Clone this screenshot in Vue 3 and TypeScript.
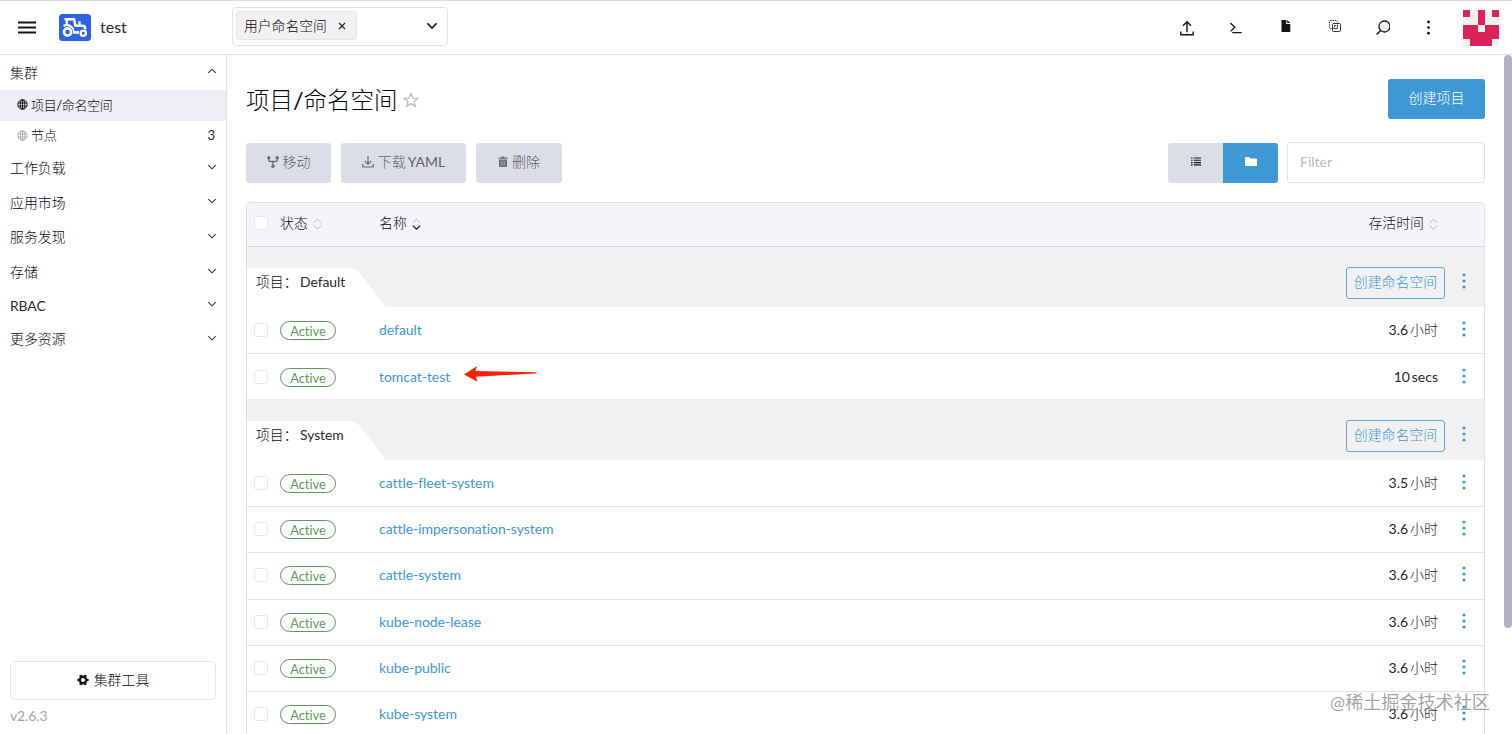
<script setup lang="ts">
interface Row { name: string; age: string; marked?: boolean }
interface Group { name: string; rows: Row[] }

const sections: string[] = ['工作负载', '应用市场', '服务发现', '存储', 'RBAC', '更多资源']

const groups: Group[] = [
  {
    name: 'Default',
    rows: [
      { name: 'default', age: '3.6 小时' },
      { name: 'tomcat-test', age: '10 secs', marked: true },
    ],
  },
  {
    name: 'System',
    rows: [
      { name: 'cattle-fleet-system', age: '3.5 小时' },
      { name: 'cattle-impersonation-system', age: '3.6 小时' },
      { name: 'cattle-system', age: '3.6 小时' },
      { name: 'kube-node-lease', age: '3.6 小时' },
      { name: 'kube-public', age: '3.6 小时' },
      { name: 'kube-system', age: '3.6 小时' },
    ],
  },
]
</script>

<template>
  <div class="page">
    <header class="top">
      <svg class="burger" width="18" height="14" viewBox="0 0 18 14"><path d="M0 1.500h18M0 6.500h18M0 11.500h18" stroke="#141419" stroke-width="1.800" /></svg>
      <div class="logo">
        <svg width="32" height="27" viewBox="0 0 32 27">
          <rect width="32" height="27" rx="3.500" fill="#2c63e5" />
          <path d="M5.500 5.200H15l1.500 6.500h7.300q2.200 0 2.200 2v3.500" fill="none" stroke="#fff" stroke-width="2.500" />
          <path d="M7.800 5v5.500L4.500 12M20.500 7.300v4M7.500 11.200q6 .3 7.200 6.500" fill="none" stroke="#fff" stroke-width="2.300" />
          <circle cx="8.600" cy="18" r="5.500" fill="#2c63e5" />
          <circle cx="8.600" cy="18" r="3.600" fill="none" stroke="#fff" stroke-width="2.600" />
          <path d="M14 17h6v2.800h-6z" fill="#fff" />
          <circle cx="24.300" cy="19.200" r="4.100" fill="#2c63e5" />
          <circle cx="24.300" cy="19.200" r="2.600" fill="none" stroke="#fff" stroke-width="2.300" />
        </svg>
      </div>
      <span class="cluster">test</span>
      <div class="select">
        <span class="tag">用户命名空间<svg width="8" height="8" viewBox="0 0 8 8"><path d="M1 1l6 6M7 1l-6 6" stroke="#222" stroke-width="1.100" /></svg></span>
        <svg width="12" height="8" viewBox="0 0 12 8"><path d="M1.300 1.300L6 6l4.700-4.700" fill="none" stroke="#141419" stroke-width="1.600" /></svg>
      </div>
      <div class="tools">
        <svg viewBox="0 0 20 20"><path d="M10 14.200V4M6 7.700l4-4 4 4M3.800 13.500v3.200h12.400v-3.200" fill="none" stroke="#141419" stroke-width="1.400" /></svg>
        <svg viewBox="0 0 20 20"><path d="M5.500 5l4.300 4.200-4.300 4.200M7.300 14.700h9.300" fill="none" stroke="#141419" stroke-width="1.300" /></svg>
        <svg viewBox="0 0 20 20"><path d="M8.500 2h4.800v4h4v8H8.500zM14.200 2l3.100 3.100h-3.100z" fill="#141419" /></svg>
        <svg viewBox="0 0 20 20" fill="none" stroke="#333" stroke-width="1"><rect x="8.500" y="2.500" width="8" height="8" rx="1" stroke-dasharray="1.400 .8" /><rect x="11.500" y="5.500" width="8" height="8" rx="1" /><rect x="13.500" y="7.500" width="3" height="3" stroke-dasharray="1.400 .7" /></svg>
        <svg viewBox="0 0 20 20"><circle cx="14.500" cy="8.500" r="5.500" fill="none" stroke="#141419" stroke-width="1.300" /><path d="M10.700 12.500l-4 4" stroke="#141419" stroke-width="1.600" /></svg>
        <svg viewBox="0 0 20 20" fill="#141419"><circle cx="10.500" cy="4" r="1.400" /><circle cx="10.500" cy="9.600" r="1.400" /><circle cx="10.500" cy="15.200" r="1.400" /></svg>
      </div>
      <svg class="avatar" width="36" height="36" viewBox="0 0 36 36" shape-rendering="crispEdges"><rect width="36" height="36" fill="#f0f0f0" /><path d="M0 0h7v7H0zM29 0h7v7h-7zM14.500 0h7v14.500h-7zM0 14.500h14.500v7h7v-7H36v14H0zM7 28h22v8H7z" fill="#da2459" /></svg>
    </header>

    <div class="body">
      <nav class="side">
        <div class="sec first"><span>集群</span><svg class="chev" viewBox="0 0 10 6"><path d="M1.300 4.800L5 1.200l3.700 3.600" /></svg></div>
        <div v-for="(item, i) in ['项目/命名空间', '节点']" :key="item" class="child" :class="{ active: i === 0 }">
          <svg width="11" height="11" viewBox="0 0 11 11" fill="none"><circle cx="5.500" cy="5.500" r="4.700" /><ellipse cx="5.500" cy="5.500" rx="2.200" ry="4.700" /><path d="M1 4h9M1 7h9M5.500 1v9" /></svg>
          <span>{{ item }}</span><b v-if="i === 1">3</b>
        </div>
        <div v-for="s in sections" :key="s" class="sec" :class="{ latin: s === 'RBAC' }"><span>{{ s }}</span><svg class="chev" viewBox="0 0 10 6"><path d="M1.300 1.200L5 4.800l3.700-3.600" /></svg></div>
        <div class="grow"></div>
        <button class="clustertools">
          <svg width="12" height="12" viewBox="0 0 12 12"><circle cx="6" cy="6" r="3.200" fill="none" stroke="#141419" stroke-width="2.400" /><path d="M9.600 6h2M.4 6h2M7.800 2.900l1-1.800M3.200 10.900l1-1.800M4.200 2.900l-1-1.800M8.800 10.900l-1-1.800" stroke="#141419" stroke-width="2.500" /></svg>
          集群工具
        </button>
        <div class="version">v2.6.3</div>
      </nav>

      <main>
        <div class="titlebar">
          <h1>项目/命名空间</h1>
          <svg width="16" height="16" viewBox="0 0 16 16"><path d="M8 1.500l1.900 4.600 4.900.3-3.800 3.100 1.300 4.800L8 11.600l-4.300 2.700L5 9.500 1.200 6.400l4.900-.3z" fill="none" stroke="#b9b9be" stroke-width="1.300" /></svg>
          <button class="primary">创建项目</button>
        </div>
        <div class="actions">
          <button class="dis move"><svg width="12" height="12" viewBox="0 0 12 12"><circle cx="1.800" cy="1.800" r="1.700" /><circle cx="10.200" cy="1.800" r="1.700" /><circle cx="6" cy="10.200" r="1.700" /><path d="M1.800 2v2.200q0 1.300 1.300 1.300h5.800q1.300 0 1.300-1.300V2M6 5.500V10" fill="none" stroke="#6c6c76" stroke-width="1.300" /></svg>移动</button>
          <button class="dis down"><svg width="12" height="12" viewBox="0 0 12 12"><path d="M6 0v8M2.800 5L6 8.200 9.200 5M.7 8v3h10.600V8" fill="none" stroke="#6c6c76" stroke-width="1.200" /></svg>下载 YAML</button>
          <button class="dis del"><svg width="10" height="12" viewBox="0 0 10 12"><path d="M.5 1.500h3V.5h3v1h3v1.200h-9zM1 3.500h8V11H1z" /><path d="M3.300 4.500v5.500M5 4.500v5.500M6.700 4.500v5.500" stroke="#b5b6be" stroke-width=".6" /></svg>删除</button>
          <div class="grow"></div>
          <div class="toggle">
            <span><svg width="10" height="9" viewBox="0 0 10 9"><path d="M0 1h1.600M2.800 1H10M0 3.300h1.600M2.800 3.300H10M0 5.600h1.600M2.800 5.600H10M0 7.900h1.600M2.800 7.900H10" stroke="#141419" stroke-width="1.100" /></svg></span>
            <span class="on"><svg width="12" height="10" viewBox="0 0 12 10"><path d="M0 1q0-1 1-1h3l1.500 1.500H11q1 0 1 1V9H0z" fill="#fff" /></svg></span>
          </div>
          <input placeholder="Filter" />
        </div>

        <section class="table">
          <div class="thead">
            <i class="check"></i>
            <span class="state">状态<svg class="sort" viewBox="0 0 9 12"><path d="M.8 4.800l3.700-3.600 3.700 3.600M.8 7.600l3.700 3.600 3.700-3.600" /></svg></span>
            <span class="name">名称<svg class="sort" viewBox="0 0 9 12"><path d="M.8 4.800l3.700-3.600 3.700 3.600" /><path class="dark" d="M.8 7.600l3.700 3.600 3.700-3.600" /></svg></span>
            <span class="age">存活时间<svg class="sort" viewBox="0 0 9 12"><path d="M.8 4.800l3.700-3.600 3.700 3.600M.8 7.600l3.700 3.600 3.700-3.600" /></svg></span>
          </div>
          <template v-for="g in groups" :key="g.name">
            <div class="group">
              <div class="tab">项目： <span>{{ g.name }}</span></div>
              <button class="create">创建命名空间</button>
              <svg class="dots" viewBox="0 0 4 16"><circle cx="2" cy="2" r="1.600" /><circle cx="2" cy="8" r="1.600" /><circle cx="2" cy="14" r="1.600" /></svg>
            </div>
            <div v-for="r in g.rows" :key="r.name" class="row">
              <i class="check"></i>
              <span class="state"><em>Active</em></span>
              <a class="name">{{ r.name }}</a>
              <svg v-if="r.marked" class="arrow" width="74" height="16" viewBox="0 0 74 16"><path d="M0 8.500L13 0l-1.500 5L72 6.200q1.500.6 0 1.200L12 10.700l1.500 5z" fill="#fb2109" /></svg>
              <span class="age">{{ r.age }}</span>
              <svg class="dots" viewBox="0 0 4 16"><circle cx="2" cy="2" r="1.600" /><circle cx="2" cy="8" r="1.600" /><circle cx="2" cy="14" r="1.600" /></svg>
            </div>
          </template>
        </section>
      </main>
      <div class="scroll"></div>
    </div>
    <div class="watermark">@稀土掘金技术社区</div>
  </div>
</template>

<style>
body { margin: 0; overflow: hidden; }
</style>

<style scoped>
* { box-sizing: border-box; }
svg { display: block; flex: none; }
.page {
  position: relative; height: 734px; overflow: hidden; display: flex; flex-direction: column;
  background: #fff; color: #09090d;
  font: 14px/20px Lato, "Noto Sans CJK SC Light", "Noto Sans CJK SC", sans-serif;
}
button, input { font: inherit; color: inherit; margin: 0; }
.top { flex: none; height: 55px; border-top: 1px solid #dcdcdc; border-bottom: 1px solid #dfe0e4; display: flex; align-items: center; padding: 0 13px 0 18px; }
.logo { margin-left: 23px; }
.cluster { margin: -1px 0 0 9px; width: 132px; font-size: 16px; color: #2a2a30; }
.select { width: 216px; height: 39px; border: 1px solid #e2e3e6; border-radius: 4px; display: flex; align-items: center; justify-content: space-between; padding: 0 9px 2px 3px; margin-top: -2px; }
.tag { height: 29px; width: 121px; background: #f1f1f2; border: 1px solid #e6e6e8; border-radius: 3px; display: flex; align-items: center; justify-content: space-between; padding: 0 10px 0 7px; font-size: 13.800px; }
.tools { margin-left: auto; display: flex; gap: 28.300px; margin-right: 25px; }
.tools svg { width: 20px; height: 20px; }
.body { flex: 1; min-height: 0; display: flex; }
.side { width: 227px; flex: none; border-right: 1px solid #dfe0e4; display: flex; flex-direction: column; }
.sec { height: 34.600px; flex: none; display: flex; align-items: center; justify-content: space-between; padding: 0 9px 0 10px; font-size: 13.900px; }
.sec.first { height: 35px; }
.sec.latin { height: 32.500px; letter-spacing: -.1px; color: #2a2a30; }
.chev { width: 10px; height: 6px; fill: none; stroke: #333; stroke-width: 1.100; margin-bottom: 3px; }
.child { height: 30.500px; flex: none; display: flex; align-items: center; gap: 3px; padding: 0 12px 1px 17px; font-size: 13px; letter-spacing: -.35px; }
.child:not(.active) { letter-spacing: 0; }
.child svg { stroke: #a0a0a4; stroke-width: .8; }
.child.active { background: #eeeff4; }
.child.active svg { stroke: #141419; stroke-width: 1; }
.child b { font-weight: 400; margin: 0 -1px 0 auto; color: #2a2a30; }
.grow { flex: 1; }
.clustertools { height: 39px; margin: 0 10px; border: 1px solid #e4e5e8; border-radius: 5px; background: #fff; display: flex; align-items: center; justify-content: center; gap: 5px; padding: 0 0 2px; font-size: 13.900px; }
.version { height: 34px; padding: 6px 10px 0; color: #a4a4a8; letter-spacing: -.1px; }
main { flex: 1; min-width: 0; padding: 24px 19px 0 19px; }
.titlebar { display: flex; align-items: center; height: 40px; }
h1 { margin: 2px 5px 0 0; font-size: 23.500px; line-height: 32px; font-weight: 400; }
.titlebar svg { margin-top: 2px; }
.titlebar .primary { margin-left: auto; width: 97px; height: 40px; background: #3d98d3; color: #fff; border: 0; border-radius: 3px; padding: 0 0 2px; }
.actions { display: flex; align-items: center; height: 41px; margin-top: 23px; }
.dis { height: 40px; background: #dcdee7; color: #5f5f69; border: 0; border-radius: 3px; margin: 0 10px 0 0; display: flex; align-items: center; justify-content: center; gap: 4px; padding: 0 0 2px; word-spacing: -1.500px; }
.dis svg { fill: #6c6c76; }
.move { width: 85px; }
.down { width: 125px; }
.del { width: 86px; }
.toggle { display: flex; width: 110px; height: 40px; border-radius: 3px; overflow: hidden; margin: 0 9px 0 0; }
.toggle span { flex: 1; background: #dcdee7; display: flex; align-items: center; justify-content: center; padding-bottom: 2px; }
.toggle .on { background: #3d98d3; }
input { width: 198px; height: 41px; border: 1px solid #dfe1e5; border-radius: 3px; padding: 0 12px 2px; outline: 0; background: #fff; }
input::placeholder { color: #b8bac8; opacity: 1; }
.table { margin-top: 19px; border: 1px solid #dfe1e6; border-radius: 4px 4px 0 0; }
.thead { height: 44px; background: #f4f5fa; border-bottom: 1px solid #d6d8de; display: flex; align-items: center; padding: 0 46px 4px 7px; font-size: 13.900px; }
.check { width: 14px; height: 14px; border: 1px solid #e6e7ea; border-radius: 3px; background: #fff; flex: none; margin-right: 12px; }
.state { width: 99px; flex: none; display: flex; align-items: center; }
.sort { width: 9px; height: 12px; fill: none; stroke: #b6b7be; stroke-width: 1; margin: 3px 0 0 5px; }
.sort .dark { stroke: #141419; stroke-width: 1.200; }
.thead .name, .thead .age { display: flex; align-items: center; }
.age { margin-left: auto; }
.row .age { word-spacing: -1.700px; color: #1f1f25; }
.group { height: 60px; background: #f1f1f1; display: flex; align-items: center; padding-right: 18px; }
.tab { align-self: flex-end; width: 139px; height: 39px; padding: 0 0 11px 9px; display: flex; align-items: center; white-space: pre; background: #fff; clip-path: polygon(0 0, 105px 0, 111px 3px, 139px 100%, 0 100%); font-size: 13.900px; letter-spacing: -.05px; }
.tab span { color: #2a2a30; margin-left: -1px; }
.create { margin: 11px 17px 0 auto; width: 99px; height: 32px; border: 1px solid #5ea8da; border-radius: 3px; background: transparent; color: #3d98d3; padding: 0 0 1px; font-size: 13.900px; }
.dots { width: 4px; height: 16px; fill: #3d98d3; }
.group .dots { margin-top: 8px; }
.row { height: 46.330px; display: flex; align-items: center; padding: 0 18px 1px 7px; border-bottom: 1px solid #e1e2e6; }
.group + .row { height: 47px; }
.row:has(+ .group) { height: 46px; padding: 1px 18px 0 7px; border-bottom-color: #f1f1f1; }
.row .dots { margin: 0 0 2px 24px; }
em { font-style: normal; width: 56px; height: 19px; margin-top: 1px; border: 1px solid #5d995d; border-radius: 10px; color: #5d995d; font-size: 12.800px; line-height: 18px; text-align: center; font-variant-ligatures: none; }
.row .name { color: #3d98d3; letter-spacing: -.04px; font-variant-ligatures: none; }
.arrow { margin: -7px 0 0 14px; }
.scroll { width: 8px; height: 573px; flex: none; border-radius: 4px; background: #b3b3c1; }
.watermark { position: absolute; left: 1330px; top: 690px; font: 18.100px/24px Lato, "Noto Sans CJK SC", sans-serif; color: rgba(110, 110, 110, .65); white-space: nowrap; }
</style>
